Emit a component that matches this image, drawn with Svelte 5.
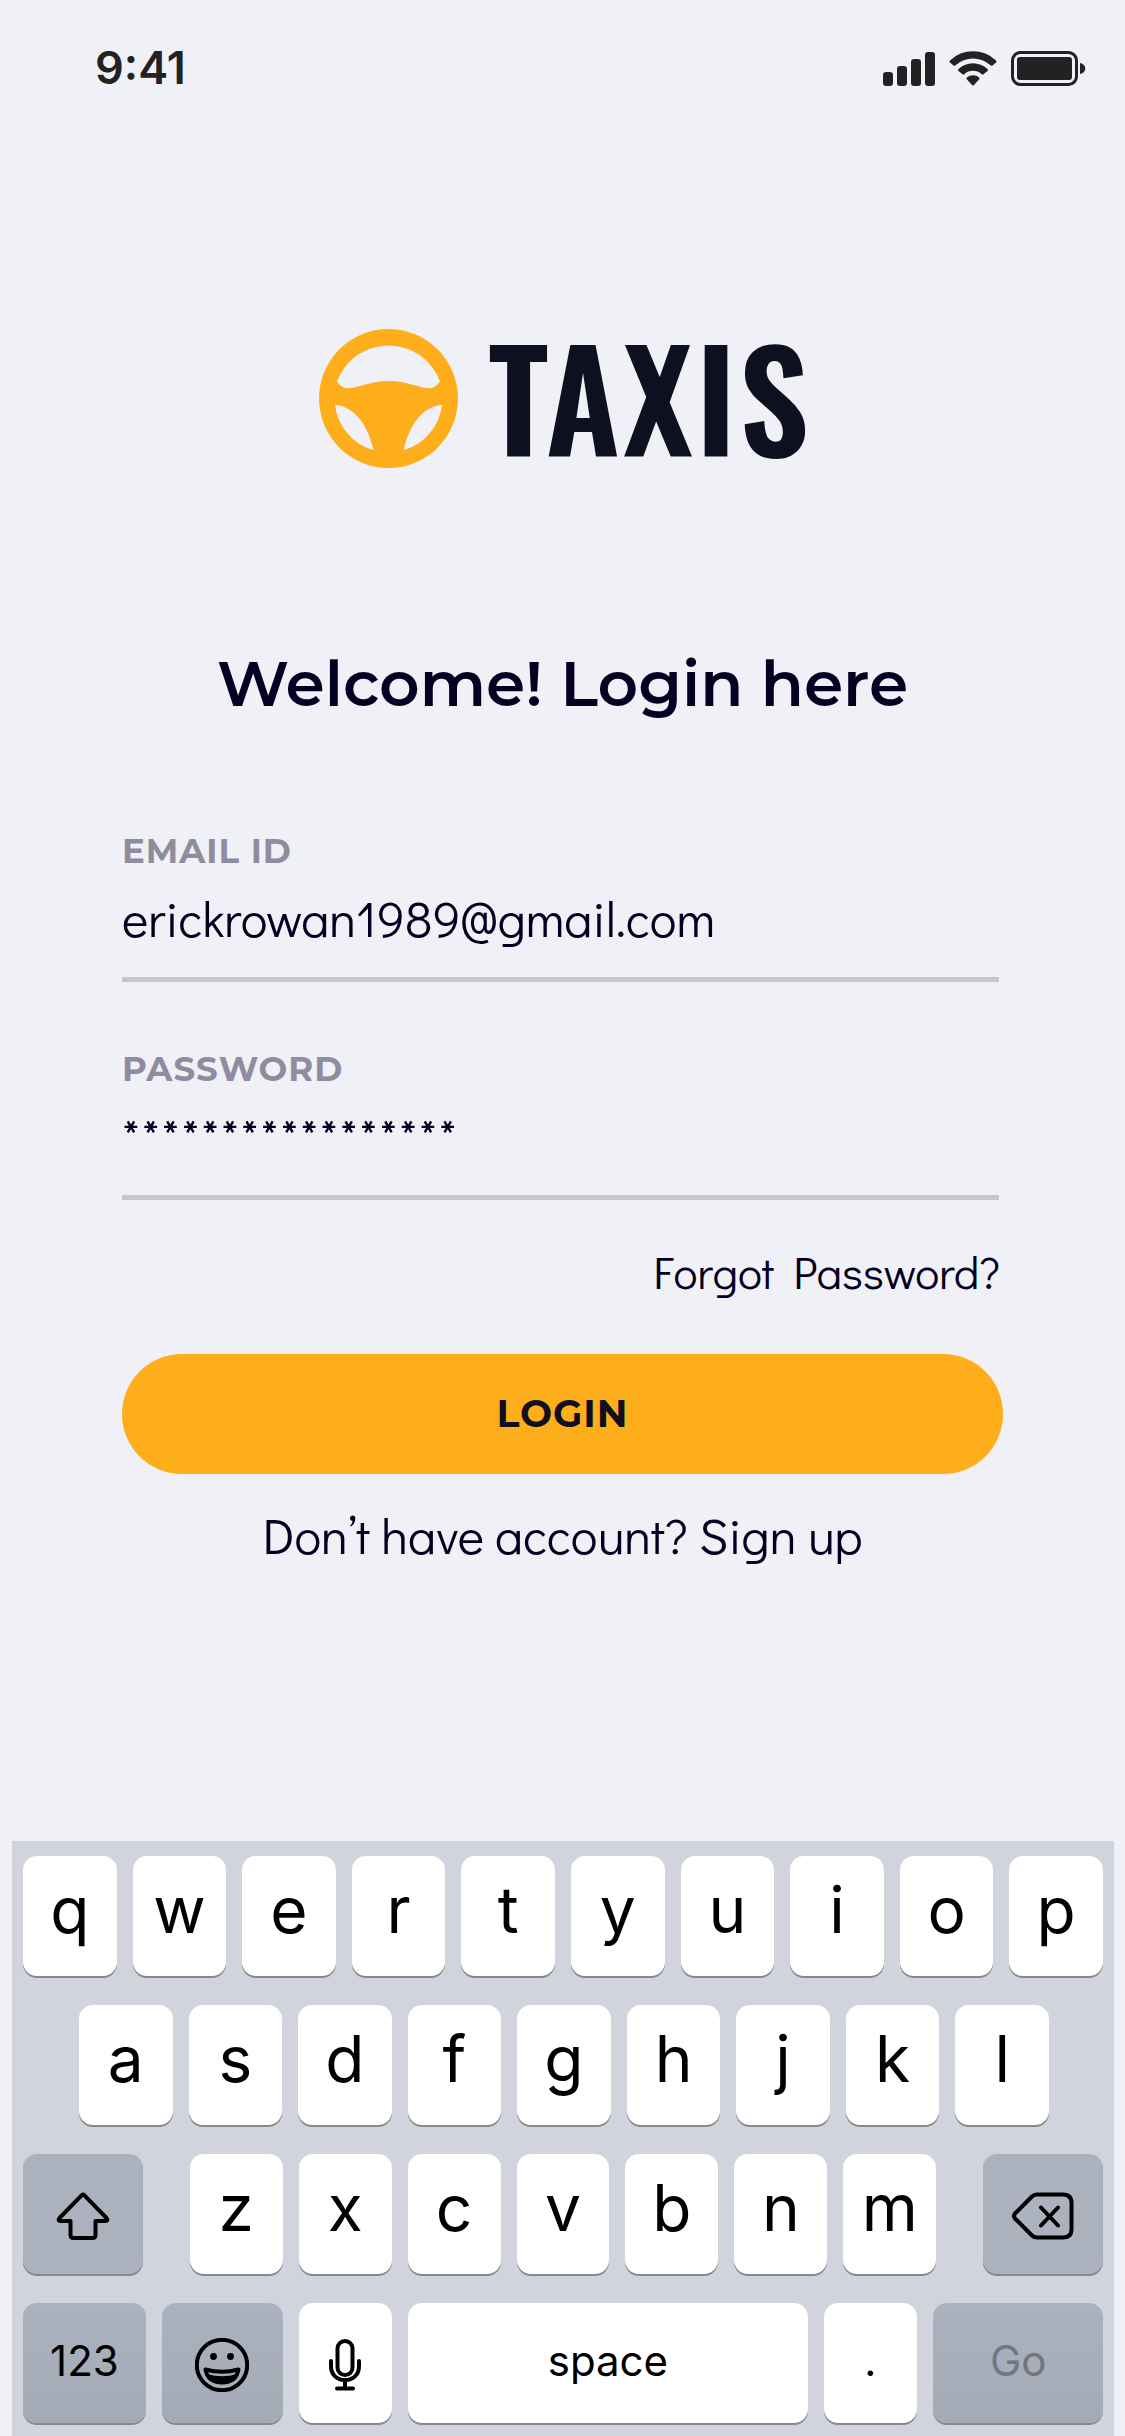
<script>
  let email = $state('erickrowan1989@gmail.com');
  let password = $state('*****************');

  const topRow = [...'qwertyuiop'];
  const homeRow = [...'asdfghjkl'];
  const lowerRow = [...'zxcvbnm'];
</script>

<div class="screen">
  <header class="status">
    <span class="time">9:41</span>
    <div class="indicators">
      <svg width="52" height="35" viewBox="0 0 52 35" aria-hidden="true">
        <rect x="0" y="21" width="10" height="14" rx="3" />
        <rect x="14" y="15" width="10" height="20" rx="3" />
        <rect x="28" y="8" width="10" height="27" rx="3" />
        <rect x="42" y="1" width="10" height="34" rx="3" />
      </svg>
      <svg width="48" height="35" viewBox="0 0 48 35" aria-hidden="true">
        <path d="M1 9.500A33 33 0 0 1 47 9.500Q48 10.500 47 11.500L43.500 14.500Q42.500 15.200 41.500 14.300A26 26 0 0 0 6.500 14.300Q5.500 15.200 4.500 14.500L1 11.500Q0 10.500 1 9.500Z" />
        <path d="M9.500 18A21 21 0 0 1 38.500 18Q39.500 19 38.500 20L34.500 23.200Q33.500 24 32.500 23A13 13 0 0 0 15.500 23Q14.500 24 13.500 23.200L9.500 20Q8.500 19 9.500 18Z" />
        <path d="M17.800 26.500A9.500 9.500 0 0 1 30.200 26.500Q31 27.500 30 28.500L25 34Q24 35 23 34L18 28.500Q17 27.500 17.800 26.500Z" />
      </svg>
      <svg width="75" height="35" viewBox="0 0 75 35" aria-hidden="true">
        <rect x="1.500" y="1.500" width="64" height="32" rx="8" class="case" />
        <rect x="6" y="6" width="55" height="23" rx="3" />
        <path d="M69 12C76 13 76 22 69 23z" />
      </svg>
    </div>
  </header>

  <main>
    <div class="brand">
      <svg width="139" height="139" viewBox="0 0 139 139" aria-hidden="true">
        <path
          fill-rule="evenodd"
          d="M69.500 0A69.500 69.500 0 1 1 69.500 139A69.500 69.500 0 1 1 69.500 0Z
             M18 52.500A54.800 54.800 0 0 1 121 52.500C118 56 115 60 109 59C100 59 88 52 69.500 52C51 52 40 59 30 59C24 60 21 56 18 52.500Z
             M16 75.700A54 54 0 0 0 54.400 121.300C51 105 45 95 39 88C32 80 25 77 16 75.700Z
             M123 75.700A54 54 0 0 1 84.600 121.300C88 105 94 95 100 88C107 80 114 77 123 75.700Z"
        />
      </svg>
      <span>TAXIS</span>
    </div>

    <h1>Welcome! Login here</h1>

    <form onsubmit={(e) => e.preventDefault()}>
      <div class="field">
        <label for="email">EMAIL ID</label>
        <input id="email" type="text" inputmode="email" bind:value={email} />
      </div>
      <div class="field">
        <label for="password">PASSWORD</label>
        <input id="password" class="masked" type="text" autocomplete="off" bind:value={password} />
      </div>
      <a class="forgot" href="#forgot">Forgot Password?</a>
      <button class="login" type="submit">LOGIN</button>
    </form>

    <p class="signup">Don’t have account? <a href="#signup">Sign up</a></p>
  </main>

  <section class="keyboard" aria-label="Keyboard">
    <div class="row">
      {#each topRow as key}<button class="key">{key}</button>{/each}
    </div>
    <div class="row home">
      {#each homeRow as key}<button class="key">{key}</button>{/each}
    </div>
    <div class="row lower">
      <button class="key dark" aria-label="Shift">
        <svg width="54" height="48" viewBox="0 0 54 48" class="line">
          <path d="M25.800 3.200Q27 2 28.200 3.200L50.500 26Q52.500 29 49.500 29H39.500V43Q39.500 46 36.500 46H17.500Q14.500 46 14.500 43V29H4.500Q1.500 29 3.500 26Z" />
        </svg>
      </button>
      <div class="letters">
        {#each lowerRow as key}<button class="key">{key}</button>{/each}
      </div>
      <button class="key dark" aria-label="Delete">
        <svg width="62" height="48" viewBox="0 0 62 48" class="line">
          <path d="M25 2.500H51Q59.500 2.500 59.500 11V37Q59.500 45.500 51 45.500H25Q22 45.500 20 43.500L3 26.500Q1 24 3 21.500L20 4.500Q22 2.500 25 2.500ZM29 15.500L46 33.500M46 15.500L29 33.500" />
        </svg>
      </button>
    </div>
    <div class="row bottom">
      <button class="key dark deep word">123</button>
      <button class="key dark deep" aria-label="Emoji">
        <svg width="54" height="54" viewBox="0 0 54 54" class="line">
          <circle cx="27" cy="27" r="25.200" />
          <circle cx="18.500" cy="18.500" r="3.400" class="solid" />
          <circle cx="35.500" cy="18.500" r="3.400" class="solid" />
          <path d="M10.500 31.500Q27 36 43.500 31.500C42 40 36 44.500 27 44.500S12 40 10.500 31.500Z" />
          <path d="M12 36Q27 40.500 42 36Q38 45 27 45T12 36Z" class="solid" />
        </svg>
      </button>
      <button class="key" aria-label="Dictate">
        <svg width="32" height="52" viewBox="0 0 32 52" class="line">
          <rect x="8.500" y="2" width="15" height="34" rx="7.500" />
          <path d="M2 22V27C2 36 8 41 16 41S30 36 30 27V22M16 41V49M8 49.500H24" />
        </svg>
      </button>
      <button class="key word">space</button>
      <button class="key word">.</button>
      <button class="key dark deep word go" disabled>Go</button>
    </div>
  </section>
</div>

<style>
  :global(body) {
    margin: 0;
    background: #f0f1f6;
  }

  .screen {
    --display: Montserrat, Inter, sans-serif;
    --thin: 'Didact Gothic', Lato, sans-serif;
    display: flex;
    flex-direction: column;
    min-height: 100vh;
    background: #f0f1f6;
    color: #050022;
    font-family: var(--thin);
  }

  a {
    color: inherit;
    text-decoration: none;
  }

  button {
    border: 0;
    margin: 0;
    padding: 0;
    cursor: pointer;
  }

  .status {
    display: flex;
    justify-content: space-between;
    align-items: center;
    padding: 40px 39px 40px 95px;
    color: #222;
    fill: #222;
  }

  .time {
    font: 600 45px/56px Inter, sans-serif;
  }

  .indicators {
    display: flex;
    gap: 14px;
  }

  .case {
    fill: none;
    stroke: #222;
    stroke-width: 3;
  }

  main {
    flex: 1;
    display: flex;
    flex-direction: column;
  }

  .brand {
    display: flex;
    justify-content: center;
    align-items: center;
    gap: 30px;
    margin-top: 193px;
    padding-left: 6px;
    fill: #ffae1b;
  }

  .brand span {
    padding-bottom: 8px;
    color: #0f101f;
    font: 600 138px/131px Oswald, 'Roboto Condensed', 'DejaVu Sans Condensed', sans-serif;
    letter-spacing: 3px;
  }

  h1 {
    margin: 171px 0 0;
    text-align: center;
    font: 600 63px/90px var(--display);
  }

  form {
    display: flex;
    flex-direction: column;
    margin: 102px 122px 0;
  }

  .field {
    display: flex;
    flex-direction: column;
    margin-right: 4px;
    border-bottom: 5px solid #c5c6d0;
  }

  .field + .field {
    margin-top: 67px;
  }

  label {
    color: #8f8ca0;
    font: 700 34px/40px var(--display);
    letter-spacing: 1px;
  }

  input {
    width: 100%;
    box-sizing: border-box;
    height: 64px;
    margin: 15px 0 27px;
    padding: 0;
    border: 0;
    outline: 0;
    background: none;
    color: inherit;
    font: 400 50px/64px var(--thin);
  }

  .masked {
    letter-spacing: 2px;
  }

  .forgot {
    align-self: flex-end;
    margin: 44px 3px 0 0;
    font: 400 45px/56px var(--thin);
  }

  .login {
    height: 120px;
    margin-top: 54px;
    border-radius: 60px;
    background: #ffae1b;
    color: #0f101f;
    font: 700 38px/48px var(--display);
    letter-spacing: 1px;
  }

  .signup {
    margin: 29px 0 0;
    text-align: center;
    font: 400 50px/64px var(--thin);
  }

  .keyboard {
    display: flex;
    flex-direction: column;
    gap: 29px;
    margin: 0 11px 0 12px;
    padding: 15px 11px 13px;
    background: #d1d4dc;
  }

  .row,
  .letters {
    display: grid;
    grid-auto-flow: column;
    grid-auto-columns: minmax(0, 1fr);
    gap: 16px;
  }

  .home {
    padding: 0 54px 0 56px;
  }

  .lower {
    grid-template-columns: 120fr 748fr 120fr;
    gap: 47px;
  }

  .bottom {
    grid-template-columns: 123fr 121fr 94fr 400fr 94fr 170fr;
  }

  .key {
    display: flex;
    justify-content: center;
    align-items: center;
    height: 120px;
    padding-bottom: 12px;
    border-radius: 14px;
    background: #fff;
    box-shadow: 0 2px 0 #85888d;
    color: #000;
    font: 400 64px/80px Inter, sans-serif;
  }

  .key:has(svg) {
    padding: 3px 0 0;
  }

  .key svg {
    display: block;
  }

  .word {
    padding: 0 0 4px;
    font-size: 42px;
  }

  .dark {
    background: #abb2be;
  }

  .deep {
    background: linear-gradient(#abb2bf, #a3abb6);
  }

  .go {
    color: #717680;
  }

  .line {
    fill: none;
    stroke: #000;
    stroke-width: 4;
    stroke-linecap: round;
    stroke-linejoin: round;
  }

  .solid {
    fill: #000;
    stroke: none;
  }
</style>
